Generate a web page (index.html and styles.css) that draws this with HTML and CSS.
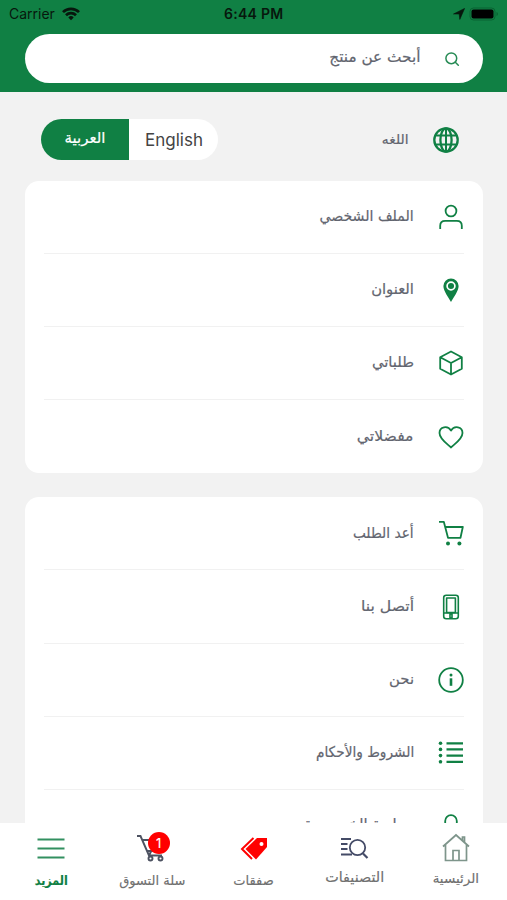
FILE: index.html
```html
<!DOCTYPE html>
<html lang="ar" dir="rtl">
<head>
<meta charset="utf-8">
<title>المزيد</title>
<link rel="stylesheet" href="styles.css">
</head>
<body>
<div class="app">
  <header class="header">
    <div class="status" dir="ltr">
      <div class="status-left"><span>Carrier</span>
        <svg width="18" height="14" viewBox="0 0 18 14" fill="none" stroke="#07170d" stroke-width="2.7"><path d="M1 5.1a11.3 11.3 0 0 1 16 0M4 8.2a7.1 7.1 0 0 1 10 0"/><path d="M9 13.2 6.3 10.4a3.8 3.8 0 0 1 5.4 0z" fill="#07170d" stroke="none"/></svg>
      </div>
      <span class="time">6:44 PM</span>
      <div class="status-right">
        <svg width="12" height="12" viewBox="0 0 12 12"><path d="M11.6.4 6.8 11.4 6.2 6H.5z" fill="#07170d" stroke="#07170d" stroke-width=".6"/></svg>
        <svg width="30" height="14" viewBox="0 0 30 14"><rect x="1" y="1" width="25" height="12" rx="3.5" fill="none" stroke="#096332"/><rect x="2.5" y="2.5" width="22" height="9" rx="2" fill="#000"/><path d="M27.5 5v4q1.5-.5 1.5-2t-1.5-2z" fill="#096332"/></svg>
      </div>
    </div>
    <div class="search">
      <svg width="16" height="16" viewBox="0 0 16 16" fill="none" stroke="#278b55" stroke-width="1.5" stroke-linecap="round"><circle cx="7.3" cy="7.3" r="5.4"/><path d="m11.3 11.3 3 3"/></svg>
      <span>أبحث عن منتج</span>
    </div>
  </header>
  <main class="content">
    <div class="language">
      <svg width="26" height="26" viewBox="0 0 26 26" fill="none" stroke="#108044" stroke-width="2.3"><circle cx="13" cy="13" r="11.7"/><ellipse cx="13" cy="13" rx="5.6" ry="11.7"/><path d="M13 1.3v23.4M2.5 8.6h21M2.5 17.4h21" stroke-width="2"/></svg>
      <span class="language-label">اللغه</span>
      <div class="toggle"><span class="english">English</span><span class="arabic">العربية</span></div>
    </div>
    <section class="card">
      <div class="row narrow"><svg class="icon" viewBox="0 0 26 26"><circle cx="13" cy="7" r="5.4"/><path d="M2.2 25v-3.2q0-5 5-5h11.6q5 0 5 5V25"/></svg><span>الملف الشخصي</span></div>
      <div class="row"><svg class="icon" viewBox="0 0 26 26"><path d="M13 25C10.5 20.5 5.4 14 5.4 9a7.6 7.6 0 0 1 15.2 0c0 5-5.1 11.5-7.6 16z" fill="#108044" stroke="none"/><circle cx="13" cy="9" r="3.9" stroke="#fff" stroke-width="1.7"/></svg><span>العنوان</span></div>
      <div class="row"><svg class="icon" viewBox="0 0 26 26"><path d="M13 1.5 23.8 7.2v11.6L13 24.5 2.2 18.8V7.2zM2.2 7.2 13 13l10.8-5.8M13 13v11.5"/></svg><span>طلباتي</span></div>
      <div class="row wide"><svg class="icon" viewBox="0 0 26 26"><path d="M13 23.5C11.3 21.3 1.5 15.6 1.5 9 1.5 2.7 9.7 1 13 6.6 16.3 1 24.5 2.7 24.5 9c0 6.6-9.8 12.3-11.5 14.5z"/></svg><span>مفضلاتي</span></div>
    </section>
    <section class="card">
      <div class="row tight"><svg class="icon" viewBox="0 0 26 26"><path d="M1 1.8h4.8L10 17.8h12.5L24.8 7H7"/><circle cx="10" cy="23.5" r="2" class="dot"/><circle cx="21.4" cy="23.5" r="2" class="dot"/></svg><span>أعد الطلب</span></div>
      <div class="row wide"><svg class="icon thin" viewBox="0 0 26 26"><rect x="5.7" y="1.3" width="14.6" height="23.4" rx="2.5"/><rect x="8.6" y="4" width="8.8" height="14.5"/><path d="M6 19h14M12 20h2v4h-2z"/></svg><span>أتصل بنا</span></div>
      <div class="row"><svg class="icon" viewBox="0 0 26 26"><circle cx="13" cy="13" r="11.8"/><path d="M13 11.3v7.5" stroke-width="2.6"/><circle cx="13" cy="8" r="1.5" class="dot"/></svg><span>نحن</span></div>
      <div class="row tight"><svg class="icon" viewBox="0 0 26 26"><path d="M8.5 3.3H25M8.5 9.4H25M8.5 15.6H25M8.5 21.8H25" stroke-width="2.2"/><circle cx="2.5" cy="3.3" r="1.8" class="dot"/><circle cx="2.5" cy="9.4" r="1.8" class="dot"/><circle cx="2.5" cy="15.6" r="1.8" class="dot"/><circle cx="2.5" cy="21.8" r="1.8" class="dot"/></svg><span>الشروط والأحكام</span></div>
      <div class="row"><svg class="icon" viewBox="0 0 26 26"><path d="M7.2 12V7a5.8 5.8 0 0 1 11.6 0v5"/><rect x="4" y="12" width="18" height="13" rx="2"/></svg><span>سياسة الخصوصية</span></div>
    </section>
  </main>
  <nav class="nav">
    <div class="tab"><svg width="30" height="30" viewBox="0 0 30 30" fill="none" stroke="#7e958b" stroke-width="1.7"><path d="M2 13.5 15 2l13 11.5M4.500 12v15.500h21V12M12 27.500v-10h6v10M23.500 9V4h-2v3"/></svg><span class="high">الرئيسية</span></div>
    <div class="tab"><svg width="30" height="30" viewBox="0 0 30 30" fill="none" stroke="#444b67" stroke-width="1.8"><circle cx="17.5" cy="14.5" r="7.7"/><path d="m23 20.5 4.500 4.500" stroke-width="2.2"/><path d="M1 6h10M1 11h6.500M1 16h6.500M1 21.500h11" stroke-width="2.2"/></svg><span class="high larger">التصنيفات</span></div>
    <div class="tab"><svg width="30" height="30" viewBox="0 0 30 30"><path d="M18 5h10v9L17 26.500 6.500 16z" fill="#f00"/><circle cx="22.5" cy="11" r="2" fill="#fff"/><path d="M14.500 5 3 16l10 10" fill="none" stroke="#f00" stroke-width="2"/></svg><span>صفقات</span></div>
    <div class="tab"><svg width="30" height="30" viewBox="0 0 30 30" fill="none" stroke="#4d5261" stroke-width="1.9"><path d="M0 3h3.500L12 22.500h13M5 7h20l-3 11H10M12 22.500l2-4"/><circle cx="13.5" cy="25.5" r="2"/><circle cx="23.5" cy="25.5" r="2"/></svg><b class="badge">1</b><span>سلة التسوق</span></div>
    <div class="tab active"><svg width="30" height="30" viewBox="0 0 30 30" stroke="#329060" stroke-width="2.2"><path d="M1.500 6.500h27M1.500 15.500h27M1.500 24.500h27"/></svg><span>المزيد</span></div>
  </nav>
</div>
</body>
</html>
```
FILE: styles.css
```css
* { box-sizing: border-box; }
body { margin: 0; font-family: "DejaVu Sans", sans-serif; color: #62656f; }
svg { display: block; flex: none; }
.app { height: 900px; display: flex; flex-direction: column; overflow: hidden; background: #f2f2f2; }
.header { height: 92px; flex: none; background: #108044; padding: 0 24.5px 0 25px; }
.status { height: 34px; margin: 0 -17px; padding: 0 1px 7px; display: grid; grid-template-columns: 1fr auto 1fr; align-items: center; color: #07170d; font: 14px Inter, sans-serif; }
.status-left, .status-right { display: flex; align-items: center; gap: 7px; }
.status-right { justify-content: flex-end; gap: 4px; }
.time { font-weight: 600; letter-spacing: .25px; }
.search { height: 49px; border-radius: 25px; background: #fff; display: flex; align-items: center; gap: 23px; padding-right: 23px; font-size: 15.3px; -webkit-text-stroke: .2px; }
.search span { padding-bottom: 3px; }
.content { flex: 1; min-height: 0; overflow: hidden; padding: 27px 24.5px 0 25px; }
.language { height: 41px; display: flex; align-items: center; padding: 0 24px 0 16px; margin-bottom: 20.5px; }
.language-label { margin-right: 24px; padding-bottom: 2px; font-size: 13.8px; -webkit-text-stroke: .2px; }
.toggle { direction: ltr; margin-right: auto; width: 177px; height: 41px; border-radius: 21px; display: flex; flex-direction: row-reverse; overflow: hidden; background: #fff; }
.toggle span { flex: 1; display: flex; align-items: center; justify-content: center; }
.english { color: #444; font: 17px Inter, sans-serif; padding-left: 1px; }
.arabic { background: #108044; color: #fff; font-size: 15px; padding-bottom: 3px; -webkit-text-stroke: .2px; }
.card { background: #fff; border-radius: 14px; padding: 0 19px; margin-bottom: 24px; }
.row { height: 73.2px; display: flex; align-items: center; gap: 23.5px; border-bottom: 1px solid #f1f1f1; font-size: 14.8px; -webkit-text-stroke: .2px; }
.row:last-child { border-bottom: 0; }
.row span { padding-bottom: 2px; white-space: nowrap; transform-origin: right; }
.card:last-child .row:last-child span { padding-bottom: 6px; }
.narrow span { transform: scaleX(.955); }
.tight span { transform: scaleX(.925); }
.wide span { transform: scaleX(1.06); }
.icon { width: 26px; height: 26px; fill: none; stroke: #108044; stroke-width: 1.8; stroke-linejoin: round; }
.icon.thin { stroke-width: 1.6; }
.icon .dot { fill: #108044; stroke: none; }
.nav { height: 77px; flex: none; background: #fff; display: grid; grid-template-columns: repeat(5, 101.2px); justify-content: center; font-size: 13px; color: #707070; -webkit-text-stroke: .15px; }
.tab { position: relative; display: flex; flex-direction: column; align-items: center; padding-top: 10px; gap: 10px; }
.tab span { white-space: nowrap; }
.tab .high { margin-top: -3px; font-size: 13.5px; }
.tab .larger { font-size: 14.4px; margin-top: -4px; }
.badge { position: absolute; left: 46px; top: 9px; width: 22px; height: 22px; border-radius: 50%; background: #f00; color: #fff; font: 13px/22px Inter, sans-serif; text-align: center; }
.active { color: #108044; font-weight: bold; }
.active span { transform: scaleX(.86); }
```
